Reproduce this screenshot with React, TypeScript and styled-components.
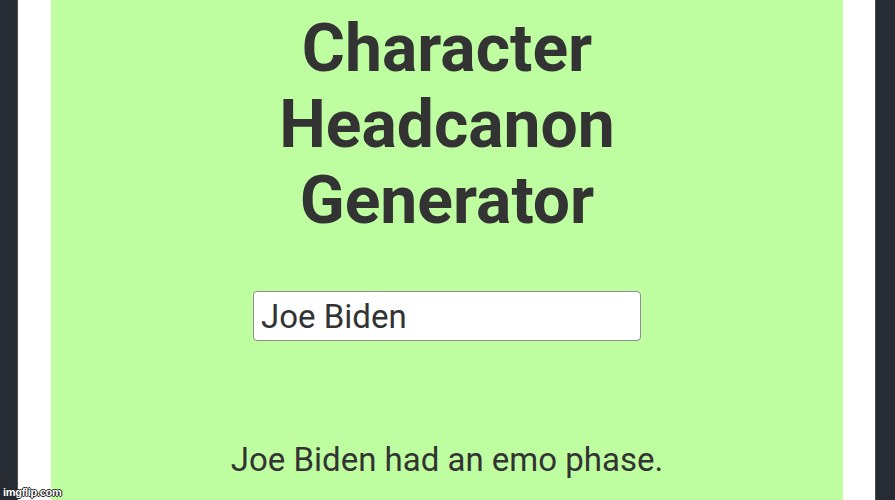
import * as React from 'react'
import styled, { createGlobalStyle } from 'styled-components'

const GlobalStyle = createGlobalStyle`
    html, body {
        margin: 0;
        padding: 0;
        height: 100%;
        overflow: hidden;
        background: #272b33;
    }

    #root {
        height: 100%;
    }
`

export default function App(): React.ReactElement {
    const [name, setName] = React.useState('Joe Biden')

    return (
        <Frame>
            <GlobalStyle />
            <Edge side="left" />
            <Gutter width={33} />
            <Panel>
                <Title>
                    Character
                    <br />
                    Headcanon
                    <br />
                    Generator
                </Title>
                <NameInput
                    type="text"
                    value={name}
                    onChange={(e) => setName(e.target.value)}
                />
                <Result>{name} had an emo phase.</Result>
            </Panel>
            <Gutter width={32} />
            <Edge side="right" />
            <Watermark>imgflip.com</Watermark>
        </Frame>
    )
}

const Frame = styled.div`
    position: relative;
    display: flex;
    width: 895px;
    height: 500px;
    overflow: hidden;
`

const Edge = styled.div<{ side: 'left' | 'right' }>`
    flex: 0 0 ${(p) => (p.side === 'left' ? '18px' : '20px')};
    background: #272b33;
    ${(p) =>
        p.side === 'left'
            ? 'border-right: 1px solid #4a4e55;'
            : 'border-left: 1px solid #4a4e55;'}
    box-sizing: border-box;
`

const Gutter = styled.div<{ width: number }>`
    flex: 0 0 ${(p) => p.width}px;
    background: #ffffff;
`

const Panel = styled.div`
    flex: 1;
    display: flex;
    flex-direction: column;
    align-items: center;
    padding-top: 11px;
    background: #befea0;
    color: #333333;
    font-family: Roboto, 'Liberation Sans', sans-serif;
`

const Title = styled.h1`
    margin: 0;
    font-size: 66px;
    line-height: 76px;
    font-weight: 700;
    text-align: center;
`

const NameInput = styled.input`
    margin-top: 52px;
    width: 388px;
    height: 50px;
    box-sizing: border-box;
    padding: 0 7px;
    border: 1px solid #8e8e8e;
    border-radius: 4px;
    background: #ffffff;
    color: #333333;
    font-family: Roboto, 'Liberation Sans', sans-serif;
    font-size: 33px;
    outline: none;
`

const Result = styled.p`
    margin: 99px 0 0;
    font-size: 33px;
    text-align: center;
`

const Watermark = styled.span`
    position: absolute;
    left: 3px;
    bottom: 2px;
    color: #ffffff;
    font-family: 'Liberation Sans', Arial, sans-serif;
    font-size: 11px;
    font-weight: 700;
    letter-spacing: -0.3px;
    text-shadow: 1px 0 #222, -1px 0 #222, 0 1px #222, 0 -1px #222;
`
